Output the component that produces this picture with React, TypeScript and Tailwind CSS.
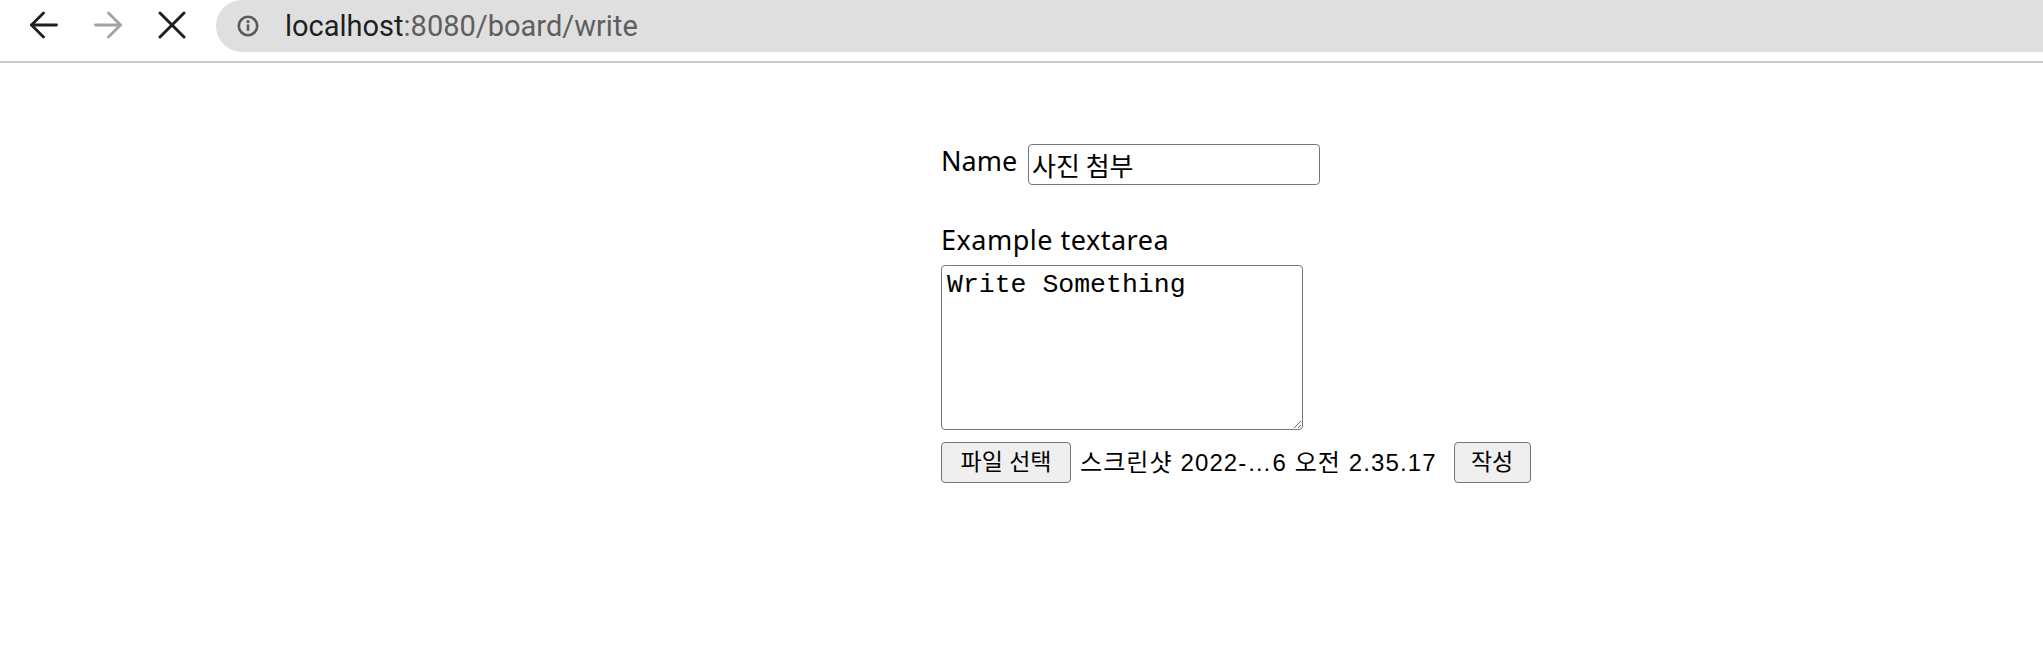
import React from "react";

function BackIcon() {
  return (
    <svg width="28" height="28" viewBox="0 0 28 28" fill="none" stroke="#1f1f1f" strokeWidth="2.8" strokeLinecap="round" strokeLinejoin="round">
      <path d="M1.5 14H26.5" />
      <path d="M13.5 2L1.5 14L13.5 26" />
    </svg>
  );
}

function ForwardIcon() {
  return (
    <svg width="28" height="28" viewBox="0 0 28 28" fill="none" stroke="#a3a3a3" strokeWidth="2.8" strokeLinecap="round" strokeLinejoin="round">
      <path d="M1.5 14H26.5" />
      <path d="M14.5 2L26.5 14L14.5 26" />
    </svg>
  );
}

function CloseIcon() {
  return (
    <svg width="28" height="28" viewBox="0 0 28 28" fill="none" stroke="#1f1f1f" strokeWidth="3" strokeLinecap="round">
      <path d="M2 2L26 26" />
      <path d="M26 2L2 26" />
    </svg>
  );
}

function InfoIcon() {
  return (
    <svg width="22" height="22" viewBox="0 0 22 22" fill="none">
      <circle cx="11" cy="11" r="9.2" stroke="#5a5a5a" strokeWidth="2.6" />
      <circle cx="11" cy="6.6" r="1.6" fill="#5a5a5a" />
      <path d="M11 9.4V15.8" stroke="#5a5a5a" strokeWidth="2.6" />
    </svg>
  );
}

export default function App() {
  return (
    <div className="w-[2043px] h-[656px] bg-white overflow-hidden">
      <div className="flex h-[61px] items-start">
        <div className="flex h-[52px] items-center pb-[3px] pl-[30px] pr-[30px] gap-[36px]">
          <BackIcon />
          <ForwardIcon />
          <CloseIcon />
        </div>
        <div className="flex-1 h-[52px] bg-[#dfdfdf] rounded-l-[26px] flex items-center pl-[21px]">
          <InfoIcon />
          <div className="ml-[26px] text-[29px] leading-none font-['Roboto',sans-serif]">
            <span className="text-[#1f1f1f]">localhost</span>
            <span className="text-[#5e5e5e]">:8080/board/write</span>
          </div>
        </div>
      </div>
      <div className="h-[2px] bg-[#cacaca]" />

      <form className="ml-[941px] pt-[81px] flex flex-col items-start text-black">
        <div className="flex items-start h-[41px]">
          <label className="w-[74px] mt-[3px] text-[27px] leading-none font-['Noto_Sans','Noto_Sans_CJK_KR',sans-serif]">Name</label>
          <input
            type="text"
            defaultValue="사진 첨부"
            className="ml-[13px] w-[292px] h-[41px] border border-[#767676] rounded-[4px] px-[3px] text-[26px] font-['Noto_Sans_CJK_KR',sans-serif] text-black bg-white outline-none"
          />
        </div>
        <label className="mt-[41px] text-[27px] tracking-[0.5px] leading-none font-['Noto_Sans','Noto_Sans_CJK_KR',sans-serif]">Example textarea</label>
        <textarea
          defaultValue="Write Something"
          className="mt-[12px] w-[362px] h-[165px] border border-[#767676] rounded-[4px] px-[5px] py-[4px] text-[26.5px] leading-[1.2] font-['Liberation_Mono',monospace] text-black bg-white outline-none"
        />
        <div className="mt-[12px] flex items-center h-[41px] font-['Liberation_Sans','Noto_Sans_CJK_KR',sans-serif] text-[23px]">
          <button type="button" className="w-[130px] h-[41px] bg-[#efefef] border border-[#767676] rounded-[4px] text-black leading-none">
            파일 선택
          </button>
          <span className="ml-[9px] text-[24px] tracking-[1.1px] text-black whitespace-nowrap">스크린샷 2022-…6 오전 2.35.17</span>
          <button type="button" className="ml-[17px] w-[77px] h-[41px] bg-[#efefef] border border-[#767676] rounded-[4px] text-black leading-none">
            작성
          </button>
        </div>
      </form>
    </div>
  );
}
